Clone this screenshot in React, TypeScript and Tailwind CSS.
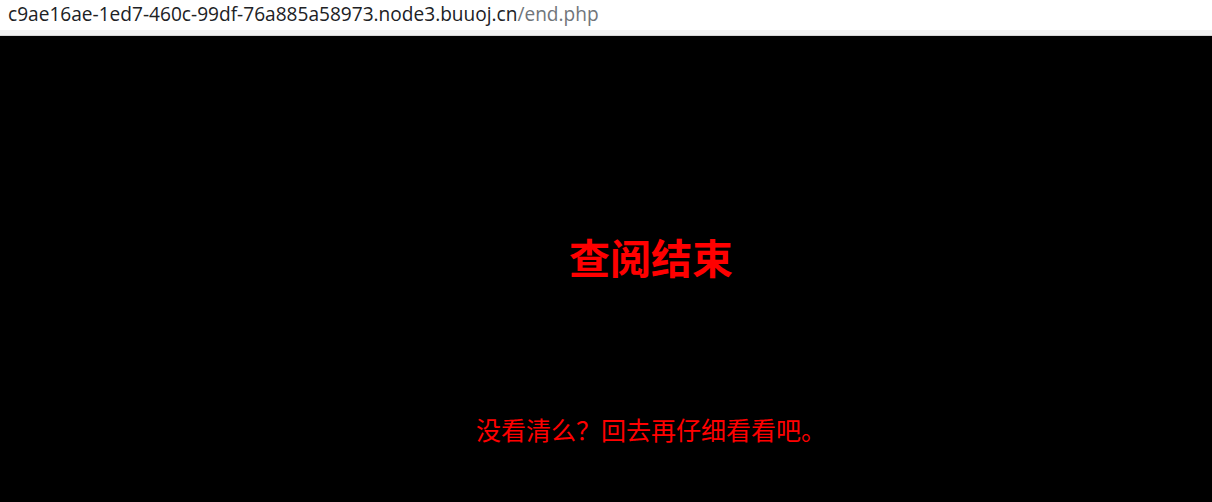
import React from "react";

const cjk = "font-['Microsoft_YaHei','Noto_Sans_CJK_SC',sans-serif]";

const App = () => {
  return (
    <div className="h-[502px] w-[1212px] overflow-hidden flex flex-col">
      {/* barre d'adresse */}
      <div className="h-[30px] bg-white flex items-center pl-[8px] pb-[2px] font-['Open_Sans',sans-serif] text-[19.1px]">
        <span className="text-[#202124]">c9ae16ae-1ed7-460c-99df-76a885a58973.node3.buuoj.cn</span>
        <span className="text-[#70757a]">/end.php</span>
      </div>
      <div className="h-[5px] bg-[#f1f1f1]" />
      <div className="h-[1px] bg-[#d6d6d6]" />

      {/* page */}
      <div className={`flex-1 bg-black flex flex-col items-center pl-[90px] ${cjk}`}>
        <h1 className="mt-[194px] text-[41px] leading-[52px] font-bold text-[#ff0000]">查阅结束</h1>
        <p className="mt-[131px] text-[25px] leading-[32px] text-[#ff0000]">没看清么？回去再仔细看看吧。</p>
      </div>
    </div>
  );
};

export default App;
